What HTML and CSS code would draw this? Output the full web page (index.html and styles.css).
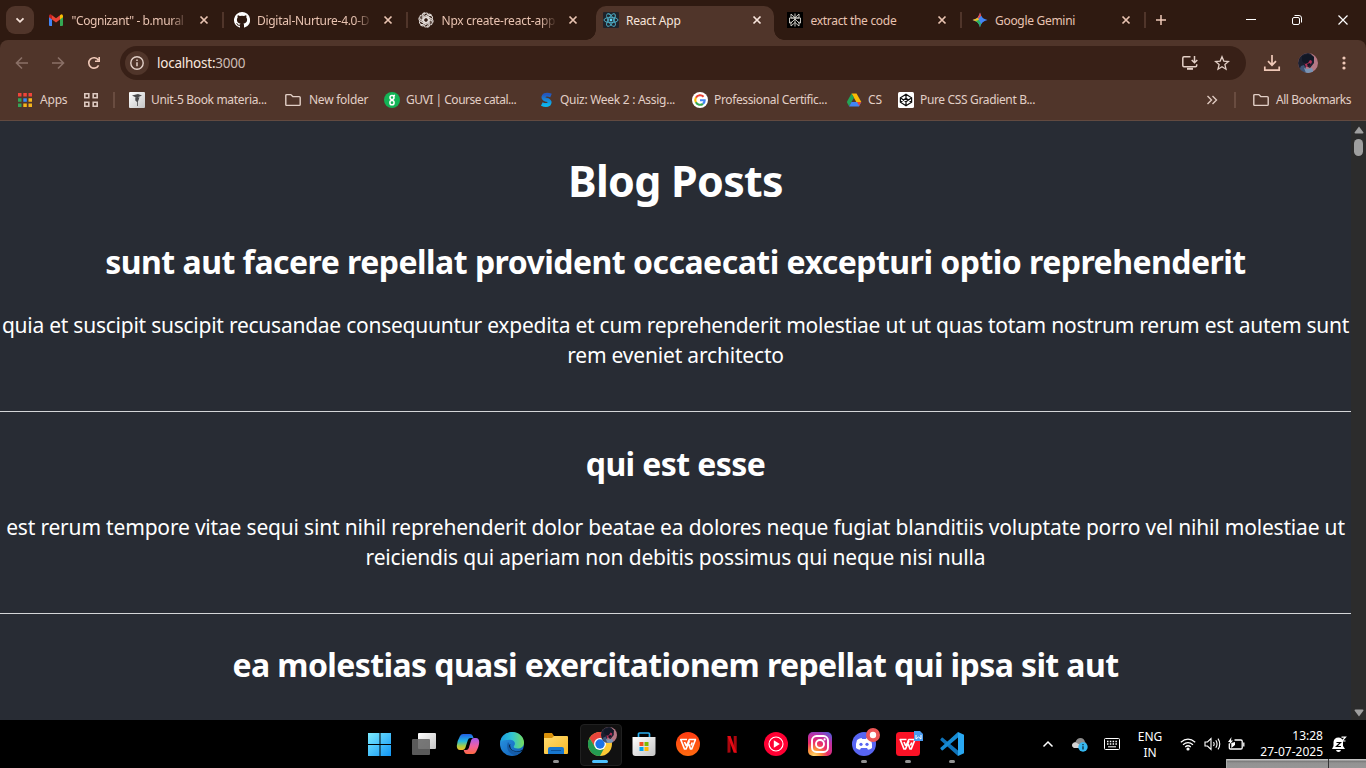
FILE: index.html
```
<!DOCTYPE html>
<html lang="en">
<head>
<meta charset="utf-8">
<title>React App</title>
<link rel="stylesheet" href="styles.css">
</head>
<body>
<svg class="defs" width="0" height="0">
  <defs>
    <symbol id="close" viewBox="0 0 16 16"><path d="M4.500 4.500l7 7M11.500 4.500l-7 7" stroke="currentColor" stroke-width="1.700" fill="none"/></symbol>
    <symbol id="folder" viewBox="0 0 18 16"><path d="M1.800 3.600q0-1 1-1h4l2 2h6.400q1 0 1 1v6.800q0 1-1 1H2.800q-1 0-1-1z" stroke="currentColor" stroke-width="1.400" fill="none"/></symbol>
    <symbol id="wmark" viewBox="0 0 17 13"><path d="M7.500 1.500H1.200L5 11h1.500l3.500-8M5 4l1.800 4M8.500 4L11 11h1.200L16 1.500H9.800L7 8M12.800 4.500l-1.300 3" stroke="currentColor" stroke-width="1.700" fill="none" stroke-linejoin="round"/></symbol>
    <linearGradient id="winblue" x1="0" y1="0" x2="1" y2="1"><stop offset="0" stop-color="#7cecff"/><stop offset="1" stop-color="#1195f5"/></linearGradient>
    <linearGradient id="gray" x1="0" y1="0" x2="1" y2="1"><stop offset="0" stop-color="#fff"/><stop offset="1" stop-color="#c4c4c4"/></linearGradient>
    <linearGradient id="cop1" x1="0" y1="0" x2="0" y2="1"><stop offset="0" stop-color="#2260e6"/><stop offset=".45" stop-color="#24b8de"/><stop offset=".75" stop-color="#a5cd45"/><stop offset="1" stop-color="#f5bd28"/></linearGradient>
    <linearGradient id="cop2" x1="0" y1="0" x2="0" y2="1"><stop offset="0" stop-color="#a45cf0"/><stop offset=".5" stop-color="#f05fa2"/><stop offset="1" stop-color="#ff6a42"/></linearGradient>
    <linearGradient id="edge1" x1="0" y1="0" x2="1" y2="0"><stop offset="0" stop-color="#1a9ce2"/><stop offset=".5" stop-color="#31c4d3"/><stop offset="1" stop-color="#76dc5b"/></linearGradient>
    <linearGradient id="edge2" x1="0" y1="0" x2="1" y2="1"><stop offset="0" stop-color="#2b98e5"/><stop offset="1" stop-color="#0d5ab4"/></linearGradient>
    <linearGradient id="fold" x1="0" y1="0" x2="1" y2="1"><stop offset="0" stop-color="#ffdc70"/><stop offset="1" stop-color="#f9b927"/></linearGradient>
    <radialGradient id="insta" cx=".25" cy="1" r="1.15"><stop offset="0" stop-color="#ffdc70"/><stop offset=".25" stop-color="#fb923a"/><stop offset=".5" stop-color="#ec2c67"/><stop offset=".78" stop-color="#b931aa"/><stop offset="1" stop-color="#5859d6"/></radialGradient>
    <linearGradient id="sgrad" x1="0" y1="0" x2="0" y2="1"><stop offset="0" stop-color="#2357be"/><stop offset="1" stop-color="#0cb6ee"/></linearGradient>
    <linearGradient id="wps" x1="0" y1="0" x2="0" y2="1"><stop offset="0" stop-color="#ff3b12"/><stop offset="1" stop-color="#ff6a0f"/></linearGradient>
    <clipPath id="face"><circle cx="10" cy="10" r="10"/></clipPath>
    <symbol id="avatar" viewBox="0 0 20 20"><g clip-path="url(#face)"><path fill="#b57784" d="M0 0h20v20H0z"/><path fill="#1b2030" d="M0 0h12l4 4v6l-4 5-4-2-2 7H0z"/><path fill="#3f5475" d="M0 20l3-7 3-1 4 8z"/><path fill="#b02f57" d="M6 9l3-3 4-1 1 4-2 4-4 1z"/><path fill="#111725" d="M4 3l6-2 6 3-1 4-3-1-2 3-3 1-3-3zM9 11l3-1 1 2-3 2z"/><path fill="#7994b4" d="M6 15l3 1 5-1 2 5H8z"/></g></symbol>
  </defs>
</svg>

<header class="browser">
  <div class="tabstrip">
    <button class="tab-search"><svg width="16" height="16" viewBox="0 0 16 16"><path d="M4.500 6.300L8 9.800l3.500-3.500" fill="none" stroke="#f6e2d9" stroke-width="1.800"/></svg></button>
    <div class="tabs">
      <div class="tab sep">
        <svg class="fav" viewBox="0 0 16 16"><path fill="#4285f4" d="M1 4.500l3 2.200V14H2q-1 0-1-1z"/><path fill="#34a853" d="M12 6.700l3-2.200V13q0 1-1 1h-2z"/><path fill="#ea4335" d="M4 7.500V3.200L8 6.300l4-3.100v4.300L8 10.600z"/><path fill="#c5221f" d="M1 4q0-1.700 1.700-1.700L4 3.200v4.300L1 5.200z"/><path fill="#fbbc04" d="M15 4q0-1.700-1.700-1.700L12 3.200v4.300l3-2.300z"/></svg>
        <span class="title fade first">"Cognizant" - b.mural</span><svg class="x"><use href="#close"/></svg>
      </div>
      <div class="tab sep">
        <svg class="fav" viewBox="0 0 16 16"><path fill="#fff" d="M8 0a8 8 0 0 0-2.500 15.600c.4.100.500-.2.500-.4v-1.500c-2.200.5-2.700-.9-2.700-.9-.4-.9-.9-1.200-.9-1.200-.7-.5.100-.5.100-.5.800.1 1.200.8 1.200.8.700 1.200 1.900.9 2.300.7.100-.5.300-.9.500-1.100-1.800-.2-3.600-.9-3.600-4 0-.9.300-1.600.8-2.100-.1-.2-.4-1 .1-2.100 0 0 .7-.2 2.200.8a7.500 7.500 0 0 1 4 0c1.500-1 2.200-.8 2.200-.8.400 1.100.2 1.900.100 2.100.5.600.8 1.300.8 2.100 0 3.100-1.900 3.800-3.700 4 .3.300.6.800.6 1.500v2.200c0 .2.100.5.600.4A8 8 0 0 0 8 0z"/></svg>
        <span class="title fade second">Digital-Nurture-4.0-D</span><svg class="x"><use href="#close"/></svg>
      </div>
      <div class="tab">
        <svg class="fav" viewBox="0 0 16 16"><g fill="none" stroke="#e4dcd8" stroke-width="1.050"><path id="petal" d="M5.700 6.600V3.500a2.600 2.600 0 0 1 4.300-1.900M5.700 6.600L8 5.300l3.400 2M6.900 6V4.300L10 2.500a2.600 2.600 0 0 1 3.600 1"/><use href="#petal" transform="rotate(60 8 8)"/><use href="#petal" transform="rotate(120 8 8)"/><use href="#petal" transform="rotate(180 8 8)"/><use href="#petal" transform="rotate(240 8 8)"/><use href="#petal" transform="rotate(300 8 8)"/></g></svg>
        <span class="title fade">Npx create-react-app</span><svg class="x"><use href="#close"/></svg>
      </div>
      <div class="tab active">
        <svg class="fav" viewBox="0 0 16 16"><rect width="16" height="16" rx="1" fill="#20232a"/><g fill="none" stroke="#4fb4cd" stroke-width=".9"><ellipse cx="8" cy="8" rx="7" ry="2.700"/><ellipse cx="8" cy="8" rx="7" ry="2.700" transform="rotate(60 8 8)"/><ellipse cx="8" cy="8" rx="7" ry="2.700" transform="rotate(120 8 8)"/></g><circle cx="8" cy="8" r="1.400" fill="#61dafb"/></svg>
        <span class="title">React App</span><svg class="x"><use href="#close"/></svg>
      </div>
      <div class="tab sep">
        <svg class="fav" viewBox="0 0 16 16"><path d="M0 0h16v16H0z"/><path d="M8 1.500v13M4 2l4 3.800L12 2v4H4zM2.500 6h11v5H12L8 7l-4 4H2.500zM4 9.500V14l4-3.500 4 3.500V9.500" fill="none" stroke="#d8d6cf" stroke-width=".9"/></svg>
        <span class="title third">extract the code</span><svg class="x"><use href="#close"/></svg>
      </div>
      <div class="tab sep">
        <svg class="fav" viewBox="0 0 16 16"><clipPath id="star"><path d="M8 .5q1.200 6.300 7.500 7.500-6.300 1.200-7.500 7.500Q6.800 9.200.5 8 6.800 6.800 8 .5z"/></clipPath><g clip-path="url(#star)"><path fill="#4385f5" d="M0 0h16v16H0z"/><path fill="#ef4c44" d="M4 0h5v4L6 7z"/><path fill="#f5c21e" d="M0 5l6 1 1 2-3 3H0z"/><path fill="#2bb35b" d="M3 9l4-1 2 4-1 4H3z"/></g></svg>
        <span class="title third">Google Gemini</span><svg class="x"><use href="#close"/></svg>
      </div>
    </div>
    <svg class="newtab" width="16" height="16" viewBox="0 0 16 16"><path d="M8 3v10M3 8h10" stroke="#f0c9b8" stroke-width="1.500"/></svg>
    <div class="winctl">
      <svg width="12" height="12"><path d="M1 5.500h10" stroke="#fff"/></svg>
      <svg width="12" height="12" fill="none" stroke="#fff"><rect x="1.500" y="3.500" width="7" height="7" rx="1.500"/><path d="M3.500 1.500H8q2.500 0 2.500 2.500v4.500"/></svg>
      <svg width="12" height="12"><path d="M1.500 1.500l9 9M10.500 1.500l-9 9" stroke="#fff" stroke-width="1.200"/></svg>
    </div>
  </div>

  <div class="toolbar">
    <svg class="nav dim" viewBox="0 0 16 16"><path d="M14 8H3M8 2.500L2.500 8 8 13.500"/></svg>
    <svg class="nav dim" viewBox="0 0 16 16"><path d="M2 8h11M8 2.500L13.500 8 8 13.500"/></svg>
    <svg class="nav" viewBox="0 0 16 16"><path d="M12.600 10.300A5.200 5.200 0 1 1 12.300 5M13.200 2v4.200H9"/></svg>
    <div class="omnibox">
      <span class="info"><svg width="16" height="16" viewBox="0 0 16 16"><circle cx="8" cy="8" r="6.200" fill="none" stroke="#e2d0c8" stroke-width="1.400"/><path d="M8 7.300v4M8 4.600v1.500" stroke="#e2d0c8" stroke-width="1.500"/></svg></span>
      <span class="url"><b>localhost:</b>3000</span>
      <svg class="install" width="18" height="16" viewBox="0 0 18 16" fill="none" stroke="#e3cfc6" stroke-width="1.500"><path d="M9.500 1.800H3q-1.200 0-1.200 1.200v7.600q0 1.200 1.200 1.200h11.500q1.200 0 1.200-1.200V9.200M13.500 1v6.500M10.700 5l2.800 2.800L16.300 5"/><path d="M6 13.800h6" stroke-width="2"/></svg>
      <svg width="16" height="16" viewBox="0 0 16 16"><path d="M8 1.800l1.800 4.300 4.700.4-3.600 3.100 1.100 4.600L8 11.700l-4 2.500 1.100-4.600-3.600-3.100 4.700-.4z" fill="none" stroke="#e3cfc6" stroke-width="1.300"/></svg>
    </div>
    <svg class="dl" width="18" height="18" viewBox="0 0 18 18" fill="none" stroke="#f0c9b8" stroke-width="1.700"><path d="M9 1v10M5 7.200l4 4 4-4M1.800 12.500v3.700h14.400v-3.700"/></svg>
    <svg width="20" height="20"><use href="#avatar"/></svg>
    <svg class="dots" width="4" height="16" fill="#f0c9b8"><circle cx="2" cy="3" r="1.600"/><circle cx="2" cy="8" r="1.600"/><circle cx="2" cy="13" r="1.600"/></svg>
  </div>

  <nav class="bookmarks">
    <a class="apps"><svg width="16" height="16" viewBox="0 0 16 16"><path fill="#f0453a" d="M1 1h3.500v3.500H1zM6.300 1h3.500v3.500H6.300zM11.500 1H15v3.500h-3.500z"/><path fill="#35a557" d="M1 6.300h3.500v3.500H1zM1 11.500h3.500V15H1z"/><path fill="#398bf7" d="M6.300 6.300h3.500v3.500H6.300z"/><path fill="#f5b51c" d="M11.500 6.300H15v3.500h-3.500zM6.300 11.500h3.500V15H6.300zM11.500 11.500H15V15h-3.500z"/></svg><span>Apps</span></a>
    <a><svg width="16" height="16" fill="none" stroke="#ddc9c0" stroke-width="1.600"><path d="M1.800 1.800h4v4h-4zM10.200 1.800h4v4h-4zM1.800 10.200h4v4h-4zM10.200 10.200h4v4h-4z"/></svg></a>
    <i class="rule"></i>
    <a class="w1"><svg width="16" height="16"><rect width="16" height="16" rx="1" fill="url(#gray)"/><path d="M3 3.500l6-1.500 4 1.500-4 1.700-3-.2zM6.300 5v3.500L8 10v4h.8v-4l1.700-4.500" fill="#4a4a4c"/></svg><span>Unit-5 Book materia...</span></a>
    <a class="w2"><svg width="18" height="16"><use href="#folder"/></svg><span>New folder</span></a>
    <a class="w3"><svg width="16" height="16"><circle cx="8" cy="8" r="8" fill="#13b456"/><g fill="none" stroke="#fff" stroke-width="1.500"><circle cx="8" cy="5.600" r="2"/><circle cx="8" cy="10.700" r="2.100"/><path d="M9 4l2-.8"/></g></svg><span>GUVI | Course catal...</span></a>
    <a class="w4"><svg width="16" height="16"><path d="M13 3.600Q9.500 2 7 3 4.300 4.700 6.200 6.800q1.300.9 3.800 1.400 2.800 1.600.8 4-2.600 1.800-7-.2" fill="none" stroke="url(#sgrad)" stroke-width="3.900"/></svg><span>Quiz: Week 2 : Assig...</span></a>
    <a class="w5"><svg width="16" height="16" fill="none" stroke-width="2.100"><circle cx="8" cy="8" r="8" fill="#fff"/><path d="M11.600 4.700A4.800 4.800 0 0 0 3.900 5.700" stroke="#ea4335"/><path d="M3.900 5.600a4.900 4.900 0 0 0 0 4.800" stroke="#fbbc05"/><path d="M3.900 10.300a4.800 4.800 0 0 0 7.100 1.500" stroke="#34a853"/><path d="M11 11.800q1.800-1.600 1.700-3.500H8" stroke="#4285f4"/></svg><span>Professional Certific...</span></a>
    <a class="w6"><svg width="16" height="16"><path fill="#fbbc05" d="M5.500 1.500h5L15.300 10h-5z"/><path fill="#23a455" d="M5.500 1.500L.8 10 3 14.200 8 5.800z"/><path fill="#4285f4" d="M5.500 10h9.800L13 14.500H3z"/><path fill="#ea4335" d="M11 10h4.300l-2.200 3.800z"/></svg><span>CS</span></a>
    <a class="w7"><svg width="16" height="16"><rect width="16" height="16" rx="1.500" fill="#fff"/><path d="M8 2.200l5.600 3.600v4.400L8 13.800l-5.600-3.600V5.800zM8 2v4M8 10v4M2.400 5.800L8 9.800l5.600-4M2.400 10.200L8 6.200l5.600 4" fill="none" stroke="#111" stroke-width="1.250"/></svg><span>Pure CSS Gradient B...</span></a>
    <svg class="more" width="12" height="12"><path d="M1.500 2l4 4-4 4M6.500 2l4 4-4 4" fill="none" stroke="#dfcac0" stroke-width="1.400"/></svg>
    <i class="rule"></i>
    <a class="all"><svg width="18" height="16"><use href="#folder"/></svg><span>All Bookmarks</span></a>
  </nav>
</header>

<div class="viewport">
  <main class="posts">
    <h1>Blog Posts</h1>
    <article>
      <h2>sunt aut facere repellat provident occaecati excepturi optio reprehenderit</h2>
      <p><span class="tight">quia et suscipit suscipit recusandae consequuntur expedita et cum reprehenderit molestiae ut ut quas totam nostrum rerum est autem sunt</span><br>rem eveniet architecto</p>
    </article>
    <article>
      <h2 class="narrow">qui est esse</h2>
      <p>est rerum tempore vitae sequi sint nihil reprehenderit dolor beatae ea dolores neque fugiat blanditiis voluptate porro vel nihil molestiae ut<br>reiciendis qui aperiam non debitis possimus qui neque nisi nulla</p>
    </article>
    <article>
      <h2 class="narrow">ea molestias quasi exercitationem repellat qui ipsa sit aut</h2>
    </article>
  </main>
  <aside class="scrollbar">
    <svg width="10" height="8"><path d="M5 .5l4.500 6q0 1-1 1h-7q-1 0-1-1z" fill="#9f9f9f"/></svg>
    <i class="thumb"></i>
    <svg class="down" width="10" height="8"><path d="M5 7.500l4.500-6q0-1-1-1h-7q-1 0-1 1z" fill="#9f9f9f"/></svg>
  </aside>
</div>

<footer class="taskbar">
  <div class="dock">
    <a><svg viewBox="0 0 24 24"><path fill="url(#winblue)" d="M0 1h11.500v11H0zM12.500 1H23v11H12.500zM0 13h11.500v11H0zM12.500 13H23v11H12.500z"/></svg></a>
    <a><svg viewBox="0 0 24 24"><rect x="6" y="1" width="18" height="16" rx="1" fill="url(#gray)"/><rect y="7" width="18" height="16" rx="1" fill="#666" opacity=".88"/></svg></a>
    <a><svg viewBox="0 0 24 24"><path fill="url(#cop1)" d="M7 2h7q2 0 2.800 2l.7 2h-3q-2 0-2.700 2.300L9.300 16q-.8 2-2.800 2H4q-3 0-3.200-4Q1 9 4 4 5 2 7 2z"/><path fill="url(#cop2)" d="M17 22h-6q-2 0-2.700-2l-.6-2h2.500q2 0 2.700-2.300L15.200 8q.8-2 2.800-2h2q3 0 3.200 4 0 4-3.200 10-1 2-3 2z"/></svg></a>
    <a><svg viewBox="0 0 24 24"><circle cx="12" cy="12" r="12" fill="url(#edge2)"/><path fill="url(#edge1)" d="M.3 10C1 4 6 0 12 0c7 0 12 5 12 10.500 0 4-3 6-6.500 6-3 0-4.500-1.300-3.500-2.500 3-4-2-7-6-6Q3 7.500.3 10z"/><path fill="#155ca8" d="M8 10c-3 8 3 13.500 9 13q3-.8 5.500-4.500C15 22 9.500 17 10 13z"/><path fill="#031426" d="M10.300 12Q9 19 17 19.300q3 0 5.500-1.500 1-.2.500 1Q16 21 11.500 18 7.500 14 10.300 12z"/></svg></a>
    <a class="run"><svg viewBox="0 0 24 24"><path fill="#d99009" d="M0 2q0-1 1-1h7l2 3h3v5H0z"/><path fill="url(#fold)" d="M0 6h8l2-2h13q1 0 1 1v16q0 1-1 1H1q-1 0-1-1z"/><path fill="#1777cf" d="M4 22v-5q0-2 2-2h12q2 0 2 2v5z"/><path fill="#0c5298" d="M7 18h10v1H7z"/></svg></a>
    <a class="current"><svg viewBox="0 0 24 24"><circle cx="12" cy="12" r="12" fill="#fcc934"/><path fill="#e8453c" d="M1.600 6A12 12 0 0 1 22.400 6H12L6.800 15z"/><path fill="#239a51" d="M1.600 6L7 15l5 3 4.500-2.600L12 24A12 12 0 0 1 1.600 6z"/><circle cx="12" cy="12" r="6" fill="#fff"/><circle cx="12" cy="12" r="4.700" fill="#1a73e8"/></svg><svg class="badge face"><use href="#avatar"/></svg></a>
    <a><svg viewBox="0 0 24 24"><path d="M6.500 6V2q0-1 1-1h9q1 0 1 1v4" fill="none" stroke="#2aaff0" stroke-width="1.700"/><path fill="url(#gray)" d="M.5 5h23v16q0 3-3 3h-17q-3 0-3-3z"/><path fill="#f25022" d="M7.500 10h4v4h-4z"/><path fill="#7fba00" d="M12.500 10h4v4h-4z"/><path fill="#00a4ef" d="M7.500 15h4v4h-4z"/><path fill="#ffb900" d="M12.500 15h4v4h-4z"/></svg></a>
    <a><svg viewBox="0 0 24 24"><circle cx="12" cy="12" r="12" fill="url(#wps)"/><use href="#wmark" x="3.500" y="6" width="17" height="13" color="#fff"/></svg></a>
    <a><svg viewBox="0 0 24 24"><path fill="#a9070e" d="M7.500 4h3v16.500l-3 .3zM13.700 4h3v16.800l-3-.3z"/><path fill="#e50914" d="M7.500 4h3l6.200 16.800-3-.4z"/></svg></a>
    <a><svg viewBox="0 0 24 24"><circle cx="12" cy="12" r="12" fill="#ff0033"/><circle cx="12" cy="12" r="7" fill="none" stroke="#fff" stroke-width="1.100"/><path fill="#fff" d="M9.800 8.300l6 3.700-6 3.700z"/></svg></a>
    <a><svg viewBox="0 0 24 24"><rect width="24" height="24" rx="5" fill="url(#insta)"/><g fill="none" stroke="#fff" stroke-width="1.900"><rect x="4" y="4" width="16" height="16" rx="4.500"/><circle cx="12" cy="12" r="4"/></g><circle cx="16.600" cy="7.400" r="1.100" fill="#fff"/></svg></a>
    <a class="run"><svg viewBox="0 0 24 24"><circle cx="12" cy="12" r="12" fill="#5865f2"/><path fill="#fff" d="M5 8q2-1.700 4.500-2l.7 1h3.600l.7-1Q17 6.300 19 8q1.500 4 1 8-2 1.500-4 1.700l-1-1.700H9l-1 1.700Q6 17.500 4 16q-.5-4 1-8z"/><circle cx="9" cy="12.300" r="1.600" fill="#5865f2"/><circle cx="15" cy="12.300" r="1.600" fill="#5865f2"/></svg><svg class="badge dot" viewBox="0 0 14 14"><circle cx="7" cy="7" r="7" fill="#ed5656"/><circle cx="7" cy="7" r="3.200" fill="#fff"/></svg></a>
    <a class="run"><svg viewBox="0 0 24 24"><rect width="24" height="24" rx="3.500" fill="#fb1226"/><use href="#wmark" x="3" y="6" width="17" height="13" color="#fff"/></svg><svg class="badge word" viewBox="0 0 9 10"><path fill="#4a9bef" d="M0 0h6l3 3v7H0z"/><path d="M2 4v4l2.500-2L7 8V4" fill="none" stroke="#fff"/></svg></a>
    <a class="run"><svg viewBox="0 0 24 24"><path fill="#0f73b9" d="M2.500 5.500L18 18.500V24L.500 8.300Q0 7.800.500 7.300l1.200-1.500z"/><path fill="#168bd3" d="M2.500 18.500L18 5.500V0L.500 15.700q-.5.500 0 1l1.200 1.500z"/><path fill="#29a8f2" d="M18 0l6 2.800v18.400L18 24z"/></svg></a>
  </div>
  <div class="tray">
    <svg class="chev" width="12" height="12"><path d="M1.500 8.500L6 4l4.500 4.500" fill="none" stroke="#fff" stroke-width="1.500"/></svg>
    <svg class="cloud" width="18" height="16"><path fill="#8c8c8c" d="M2 11q-2-2 0-4 1-1 2.500-1Q6 2 9.500 2 13 2 14 6q2 1 1.500 4L9 12H4z"/><path fill="#d3d3d3" d="M3 12q-2-1-2-3 1-3 4-2.500L11 10v2z"/><circle cx="12" cy="11" r="4.700" fill="#35b8f1"/><path d="M12 10.300v3.200M12 8v1.300" stroke="#102f40" stroke-width="1.400"/></svg>
    <svg class="kbd" width="16" height="12" fill="none" stroke="#fff"><rect x=".500" y=".5" width="15" height="11" rx="1"/><path d="M3 3.500h10M3 6h10" stroke-dasharray="1.500 1.300" stroke-width="1.300"/><path d="M4 8.800h8"/></svg>
    <div class="lang">ENG<br>IN</div>
    <svg class="wifi" width="16" height="14" viewBox="0 0 16 14" fill="none" stroke="#fff" stroke-width="1.200"><path d="M.8 5.300q7.200-6.500 14.400 0M3 7.800q5-4.500 10 0M5.200 10q2.800-2.500 5.600 0"/><circle cx="8" cy="12" r="1" fill="#fff"/></svg>
    <svg class="vol" width="17" height="14" fill="none" stroke="#fff" stroke-width="1.100"><path d="M1 5h2.500L7 1.500v11L3.500 9H1zM9.500 5q1.300 2 0 4M11.800 3.300q2.500 3.700 0 7.400M14 1.600q3.500 5.400 0 10.800"/></svg>
    <svg class="bat" width="17" height="14" fill="none" stroke="#fff" stroke-width="1.300"><path d="M6.500 3H13q1.200 0 1.200 1.200v6.600q0 1.200-1.200 1.200H2.500q-1.200 0-1.200-1.200V6.500M15.800 5.500v4"/><path fill="#fff" stroke="none" d="M3.300 6L7 5v3l-3.700 3zM3.500 0L0 5h2L1 8l4-4.500H3z"/></svg>
    <div class="clock">13:28<br>27-07-2025</div>
    <svg class="bell" width="16" height="16"><path fill="#fff" d="M2.500 6Q3 1.500 7.500 1.500 11 1.500 12 5v5l2 3H1l1.500-3zM5 14h5q-.5 2-2.500 2T5 14z"/><path d="M5.500 6.500h4l-4 4h4.500" fill="none" stroke="#000" stroke-width="1.200"/><path d="M10.500 1.200h4L11 5h3.500" fill="none" stroke="#fff" stroke-width="1.200"/></svg>
    <div class="ghost"><i></i></div>
  </div>
</footer>
</body>
</html>
```

FILE: styles.css
```
* { box-sizing: border-box; }
body {
  margin: 0;
  width: 1366px;
  height: 768px;
  overflow: hidden;
  background: #2f1a11;
  font-family: "Noto Sans", "Open Sans", sans-serif;
  font-size: 12px;
  display: flex;
  flex-direction: column;
}
svg { display: block; flex: none; }
.defs { position: absolute; }

.browser { height: 121px; flex: none; }
.tabstrip { height: 40px; display: flex; align-items: center; padding-left: 6px; background: #2f1a11; }
.tab-search {
  width: 28px; height: 28px; padding: 0; border: 0; border-radius: 9px;
  background: #50352a; display: flex; align-items: center; justify-content: center;
}
.tabs { display: flex; margin-left: 4px; height: 40px; }
.tab {
  position: relative; width: 184.5px; height: 40px; flex: none;
  display: flex; align-items: center; padding-left: 10px; color: #e9c3b1;
}
.tab .fav { width: 16px; height: 16px; margin-left: 1px; }
.tab:first-child .fav { margin-left: 0; margin-right: 1px; }
.tab .title { width: 115px; margin-left: 7.500px; padding-top: 2px; white-space: nowrap; line-height: 20px; letter-spacing: -.23px; }
.tab .fade {
  -webkit-mask-image: linear-gradient(90deg, #000 85%, transparent);
  mask-image: linear-gradient(90deg, #000 85%, transparent);
}
.tab .first { letter-spacing: -.42px; margin-left: 6.500px; width: 116px; }
.tab .second { letter-spacing: -.3px; }
.tab .third { letter-spacing: -.3px; }
.tab .x { width: 16px; height: 16px; margin-left: 8px; }
.tab.sep::after { content: ""; position: absolute; right: -1px; top: 12px; width: 2px; height: 16px; background: #50352a; }
.tab.active { color: #f8e5dc; }
.tab.active::before {
  content: ""; position: absolute; z-index: 0; left: 4px; width: 178px; top: 6px; bottom: 0;
  border-radius: 10px 10px 0 0; background: #50352a;
}
.tab.active::after {
  content: ""; position: absolute; left: -6px; right: -8px; bottom: 0; height: 10px;
  background:
    radial-gradient(circle at 0 0, transparent 9.5px, #50352a 10px) left / 10px 10px no-repeat,
    radial-gradient(circle at 100% 0, transparent 9.5px, #50352a 10px) right / 10px 10px no-repeat;
}
.tab.active > * { position: relative; z-index: 1; }
.newtab { margin-left: 8px; }
.winctl { display: flex; gap: 34px; margin-left: auto; margin-right: 17px; }

.toolbar {
  height: 43px; display: flex; align-items: center; padding: 3px 20px 0 14px;
  background: #50352a; border-radius: 8px 8px 0 0;
}
.nav { width: 16px; height: 16px; margin-right: 20px; fill: none; stroke: #f0c9b8; stroke-width: 1.6; }
.nav.dim { stroke: #8a7067; }
.omnibox {
  width: 1126px; height: 34px; margin-left: -2px; border-radius: 17px; background: #382017;
  display: flex; align-items: center; padding: 0 16px 0 5px;
}
.info { width: 24px; height: 24px; border-radius: 12px; background: #50352a; display: flex; align-items: center; justify-content: center; }
.url { margin-left: 8px; font-size: 13.5px; letter-spacing: -.24px; color: #cdbcb4; }
.url b { font-weight: 400; color: #f8e7df; }
.install { margin-left: auto; margin-right: 15px; }
.dl { margin-left: 17px; margin-right: 17px; }
.dots { margin-left: auto; }

.bookmarks {
  height: 38px; display: flex; align-items: center; padding: 0 15px 4px 17px;
  background: #50352a; border-bottom: 1px solid #624a40; color: #e2cfc6;
}
.bookmarks a { display: flex; align-items: center; gap: 6px; white-space: nowrap; letter-spacing: -.32px; flex: none; }
.bookmarks .apps { width: 66px; gap: 7px; letter-spacing: -.2px; }
.rule { width: 2px; height: 16px; background: #694c40; flex: none; }
.bookmarks .apps + a { width: 30px; }
.bookmarks .w1 { margin-left: 14px; width: 155px; }
.bookmarks .w2 { width: 100px; gap: 7px; letter-spacing: -.25px; }
.bookmarks .w3 { width: 154px; letter-spacing: -.48px; }
.bookmarks .w4 { width: 154px; letter-spacing: -.28px; }
.bookmarks .w5 { width: 154px; letter-spacing: -.36px; }
.bookmarks .w6 { width: 52px; letter-spacing: 0; }
.bookmarks .w7 { letter-spacing: -.35px; }
.more { margin-left: auto; }
.more + .rule { margin: 0 16px; }
.bookmarks .all { letter-spacing: -.44px; }

.viewport { height: 599px; flex: none; display: flex; background: #282c34; }
.posts { width: 1351px; overflow: hidden; color: #fff; text-align: center; padding-top: 31px; }
.posts h1 { margin: 0 0 30px; font-size: 43px; line-height: 58px; letter-spacing: -.72px; }
.posts h2 { margin: 0 0 26px; font-size: 32px; line-height: 44px; letter-spacing: -.53px; }
.posts .narrow { letter-spacing: -.6px; }
.posts p { margin: 0; font-size: 21px; line-height: 30px; letter-spacing: -.185px; white-space: nowrap; }
.posts .tight { letter-spacing: -.245px; }
.posts article { padding-bottom: 41px; margin-bottom: 30px; border-bottom: 1px solid #d5d6d8; }
.posts article:last-child { margin-top: -1px; }
.scrollbar { width: 15px; background: #2c2c2c; display: flex; flex-direction: column; align-items: center; padding: 5px 0 3px; }
.thumb { width: 9px; height: 17px; border-radius: 5px; background: #9f9f9f; margin-top: 5px; }
.down { margin-top: auto; }

.taskbar { height: 48px; flex: none; background: #000; display: flex; color: #fff; }
.dock { display: flex; margin-left: 358px; }
.dock a { position: relative; width: 44px; height: 48px; display: flex; align-items: center; justify-content: center; }
.dock a > svg { position: relative; width: 24px; height: 24px; }
.dock .run::after {
  content: ""; position: absolute; left: 19px; top: 40px; width: 6px; height: 3px; border-radius: 2px; background: #929292;
}
.dock .current::before {
  content: ""; position: absolute; left: 2px; top: 4px; width: 40px; height: 40px;
  border: 1px solid #202020; border-radius: 4px; background: #111;
}
.dock .current::after {
  content: ""; position: absolute; left: 14px; top: 40px; width: 16px; height: 3px; border-radius: 2px; background: #4cc2ff;
}
.dock a > .badge { position: absolute; }
.dock a > .face { left: 23px; top: 7px; width: 16px; height: 16px; }
.dock a > .dot { left: 24px; top: 8px; width: 14px; height: 14px; }
.dock a > .word { left: 28px; top: 11px; width: 9px; height: 10px; }
.tray { position: relative; display: flex; align-items: center; flex: 1; padding-left: 68px; line-height: 16px; }
.cloud { margin-left: 17px; }
.kbd { margin-left: 15px; }
.lang { width: 28px; margin-left: 16px; text-align: center; padding-top: 2px; }
.wifi { margin-left: 16px; }
.vol { margin-left: 8px; }
.bat { margin-left: 7px; }
.clock { width: 70px; margin-left: 8px; text-align: right; }
.bell { margin-left: 8px; }
.ghost {
  position: absolute; right: 0; bottom: 0; width: 140px; height: 9px;
  background: linear-gradient(#c4c4c4 0 1px, #777 2px, #929292 4px, #969696); border-left: 1px solid #aaa;
}
.ghost i { display: block; margin-left: 101px; width: 1px; height: 9px; background: #333; }
```
